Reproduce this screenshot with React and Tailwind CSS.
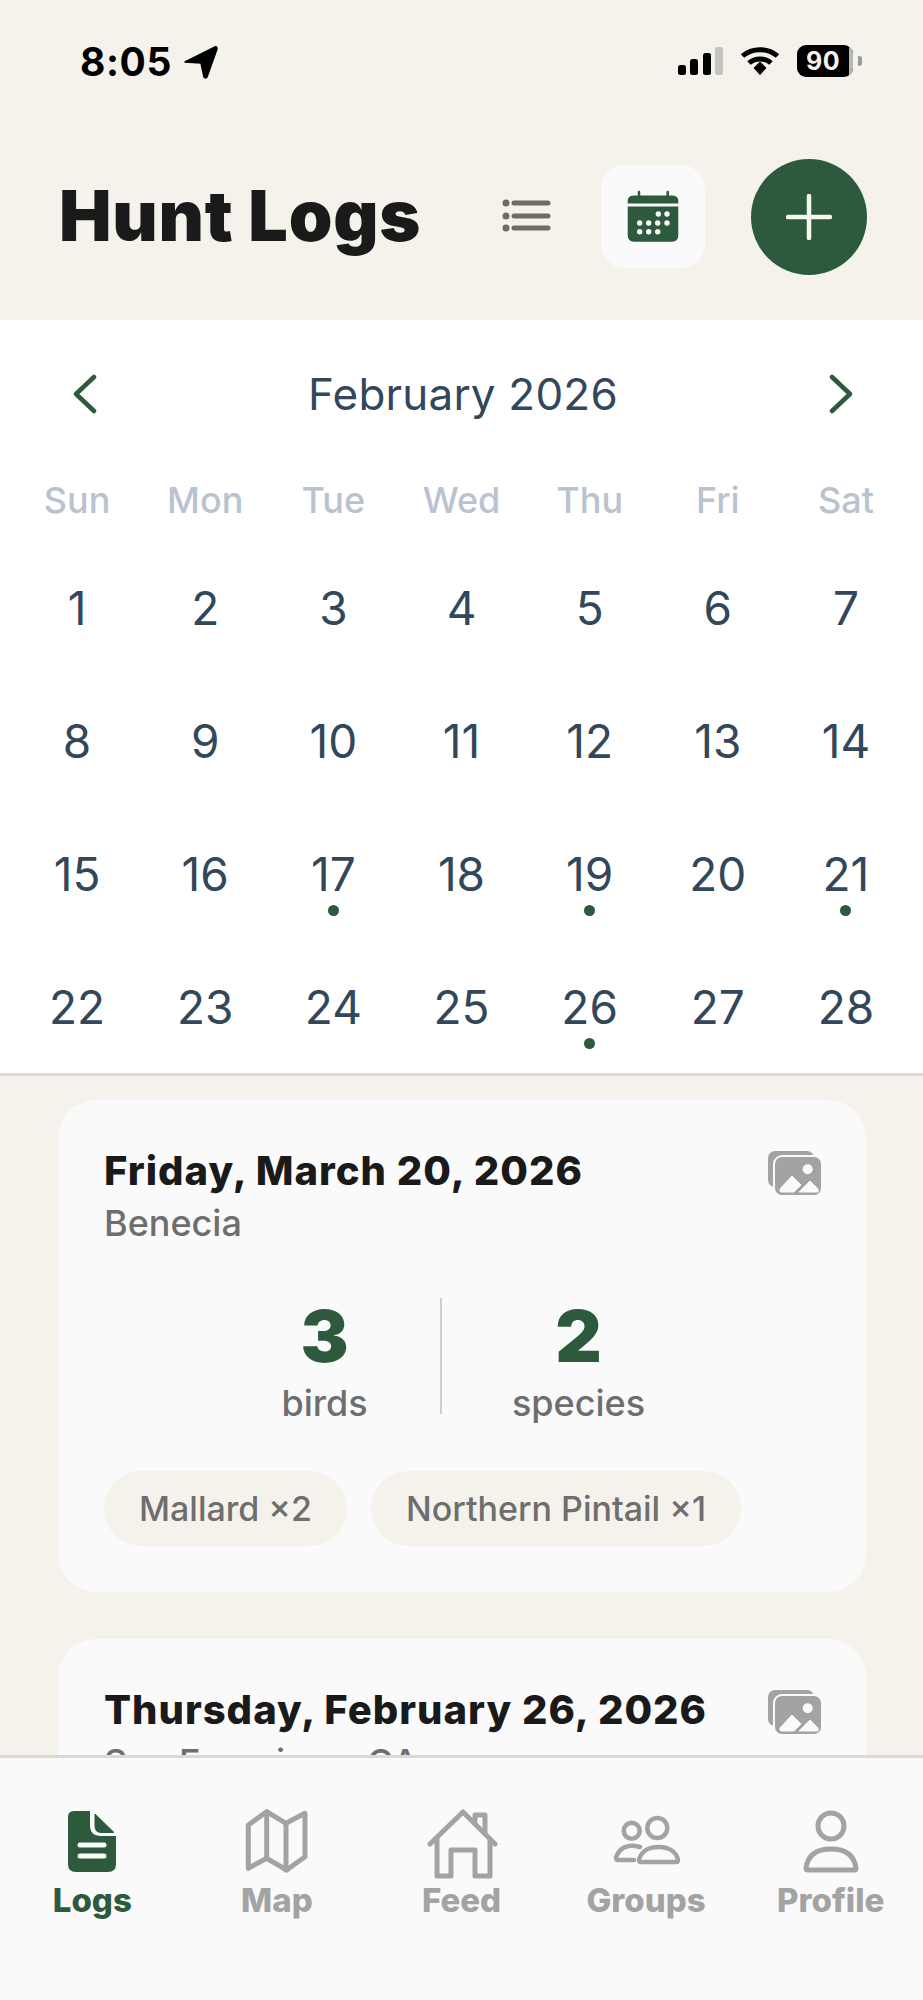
const font = { fontFamily: "Inter, sans-serif" };

const weekdays = ["Sun", "Mon", "Tue", "Wed", "Thu", "Fri", "Sat"];
const dotted = [17, 19, 21, 26];
const days = Array.from({ length: 28 }, (_, i) => i + 1);

function StatusBar() {
  return (
    <div className="h-[124px] shrink-0 flex items-start justify-between pt-[42px] pl-[80px] pr-[61px]">
      <div className="flex items-center gap-[12px] text-black">
        <span className="text-[39px] leading-[40px] font-bold tracking-[0.6px]">8:05</span>
        <svg width="34" height="34" viewBox="0 0 34 34" fill="#000">
          <path d="M1 17 L31 2 Q33 1 33 4 L23 32 Q22 34 20 32 L17 18 Z" stroke="#000" strokeWidth="1.5" strokeLinejoin="round" />
        </svg>
      </div>
      <div className="flex items-center gap-[17px] mt-[3px]">
        <svg width="46" height="30" viewBox="0 0 46 30">
          <rect x="1" y="19" width="8" height="10" rx="2.5" fill="#000" />
          <rect x="13" y="13" width="8" height="16" rx="2.5" fill="#000" />
          <rect x="26" y="7" width="8" height="22" rx="2.5" fill="#000" />
          <rect x="38" y="1" width="8" height="28" rx="2.5" fill="#c4c4be" />
        </svg>
        <svg width="40" height="30" viewBox="0 0 40 30" fill="none" stroke="#000" strokeWidth="5">
          <path d="M2.5 10 C12 1.5 28 1.5 37.5 10" />
          <path d="M9 17 C15 11.5 25 11.5 31 17" />
          <path d="M13.5 22 L20 15.5 L26.5 22 L20 29 Z" fill="#000" stroke="none" />
        </svg>
        <div className="flex items-center gap-[5px]">
          <div className="w-[56px] h-[32px] rounded-[9px] bg-black overflow-hidden flex">
            <div className="flex-1 flex items-center justify-center text-[#f5f2eb] text-[25px] font-bold leading-none tracking-[0.5px]">90</div>
            <div className="w-[4px] bg-[#b9b9b3]" />
          </div>
          <div className="w-[4px] h-[10px] rounded-r-[3px] bg-[#9a9a96]" />
        </div>
      </div>
    </div>
  );
}

function Header() {
  return (
    <div className="h-[196px] shrink-0 flex items-start pl-[59px] pr-[56px] pt-[35px]">
      <h1 className="flex-1 text-[70px] leading-[114px] font-black text-[#1a1a1a] tracking-[0.8px]">Hunt Logs</h1>
      <div className="w-[54px] h-[38px] mt-[38px] mr-[48px]">
        <svg width="54" height="38" viewBox="0 0 54 38" fill="none" stroke="#6e6b69" strokeWidth="5" strokeLinecap="round">
          <path d="M15 6 H49" />
          <path d="M15 19 H49" />
          <path d="M15 31 H49" />
          <circle cx="7" cy="6" r="3.5" fill="#6e6b69" stroke="none" />
          <circle cx="7" cy="19" r="3.5" fill="#6e6b69" stroke="none" />
          <circle cx="7" cy="31" r="3.5" fill="#6e6b69" stroke="none" />
        </svg>
      </div>
      <div className="w-[104px] h-[103px] mt-[6px] rounded-[24px] bg-[#fafafa] flex items-center justify-center">
        <svg width="54" height="54" viewBox="0 0 54 54" fill="#2d5a3d">
          <path d="M13 2 V7 M41.7 2 V7" stroke="#2d5a3d" strokeWidth="2.5" strokeLinecap="round" />
          <path d="M1.7 13.5 V11 Q1.7 5.5 8 5.5 H46 Q52.3 5.5 52.3 11 V13.5 Z" />
          <path d="M1.7 16.5 H52.3 V45 Q52.3 51.7 46 51.7 H8 Q1.7 51.7 1.7 45 Z" />
          <g fill="#fafafa">
            <circle cx="32.3" cy="24" r="2.7" />
            <circle cx="41" cy="24" r="2.7" />
            <circle cx="13.7" cy="33" r="2.7" />
            <circle cx="22.7" cy="33" r="2.7" />
            <circle cx="31.7" cy="33" r="2.7" />
            <circle cx="41" cy="33" r="2.7" />
            <circle cx="13.7" cy="41.7" r="2.7" />
            <circle cx="22.7" cy="41.7" r="2.7" />
            <circle cx="31.7" cy="41.7" r="2.7" />
          </g>
        </svg>
      </div>
      <div className="w-[116px] h-[116px] ml-[46px] rounded-full bg-[#2d5a3d] flex items-center justify-center">
        <svg width="46" height="46" viewBox="0 0 46 46" fill="none" stroke="#f5f5f2" strokeWidth="4.5" strokeLinecap="round">
          <path d="M23 2 V44" />
          <path d="M2 23 H44" />
        </svg>
      </div>
    </div>
  );
}

function Calendar() {
  return (
    <div className="h-[756px] shrink-0 bg-white border-b-[3px] border-[#d9d9d5] px-[13px]">
      <div className="h-[148px] flex items-center justify-between pl-[59px] pr-[56px]">
        <svg width="26" height="40" viewBox="0 0 26 40" fill="none" stroke="#2d5a3d" strokeWidth="4.5" strokeLinecap="round" strokeLinejoin="round">
          <path d="M22 3 L4 20 L22 37" />
        </svg>
        <span className="text-[44px] leading-none text-[#33475a] tracking-[0.2px]">February 2026</span>
        <svg width="26" height="40" viewBox="0 0 26 40" fill="none" stroke="#2d5a3d" strokeWidth="4.5" strokeLinecap="round" strokeLinejoin="round">
          <path d="M4 3 L22 20 L4 37" />
        </svg>
      </div>
      <div className="grid grid-cols-7 h-[64px] items-center">
        {weekdays.map((d) => (
          <div key={d} className="text-center text-[36px] leading-none font-[550] text-[#b9c3d0]">{d}</div>
        ))}
      </div>
      <div className="grid grid-cols-7 auto-rows-[133px] pt-[23px]">
        {days.map((d) => (
          <div key={d} className="flex flex-col items-center pt-[28px]">
            <span className="text-[46px] leading-[50px] text-[#33475a]">{d}</span>
            {dotted.includes(d) && <span className="w-[11px] h-[11px] mt-[6px] rounded-full bg-[#2d5a3d]" />}
          </div>
        ))}
      </div>
    </div>
  );
}

function Gallery() {
  return (
    <svg width="56" height="48" viewBox="0 0 56 48" className="shrink-0">
      <rect x="1" y="2" width="46" height="36" rx="7" fill="#a3a3a3" />
      <rect x="6" y="6" width="50" height="42" rx="9" fill="#fafafa" />
      <rect x="8" y="8" width="46" height="38" rx="7" fill="#a3a3a3" />
      <circle cx="40.7" cy="20.3" r="5" fill="#fafafa" />
      <path d="M13 42 V40 L25 27 L34 36 L27 43 H14 Z" fill="#fafafa" stroke="#fafafa" strokeWidth="1" strokeLinejoin="round" />
      <path d="M32 43 L43 32 L51 40 V43 Z" fill="#fafafa" stroke="#fafafa" strokeWidth="1" strokeLinejoin="round" />
    </svg>
  );
}

function Stat({ value, label, width }) {
  return (
    <div className={width + " flex flex-col items-center"}>
      <span className="text-[72px] leading-[76px] font-black text-[#2d5a3d]">{value}</span>
      <span className="text-[36px] leading-[42px] font-[550] text-[#6e6e6e] mt-[8px]">{label}</span>
    </div>
  );
}

function Card({ date, place, stats, chips }) {
  return (
    <div className="rounded-[38px] bg-[#fafafa] px-[46px] pt-[46px] pb-[46px] mb-[47px]">
      <div className="flex items-start justify-between h-[50px]">
        <span className="text-[40px] leading-[50px] font-extrabold text-[#1a1a1a] tracking-[1px]">{date}</span>
        <div className="mr-[-3px] mt-[3px]"><Gallery /></div>
      </div>
      <div className="text-[36px] leading-[52px] font-[550] text-[#6e6e6e] mt-[1px]">{place}</div>
      {stats && (
        <div className="flex justify-center items-stretch mt-[49px] pr-[5px]">
          <Stat value={stats[0]} label="birds" width="w-[174px]" />
          <div className="w-[2px] h-[116px] bg-[#cfcfcf] ml-[28px] mr-[34px]" />
          <Stat value={stats[1]} label="species" width="w-[206px]" />
        </div>
      )}
      {chips && (
        <div className="flex gap-[24px] mt-[47px]">
          {chips.map((c) => (
            <span key={c} className="h-[75px] px-[35px] rounded-full bg-[#f5f2eb] flex items-center text-[34px] font-[550] text-[#6e6e6e]">{c}</span>
          ))}
        </div>
      )}
    </div>
  );
}

const navItem = "flex flex-col items-center";
const navLabel = "text-[33px] leading-[40px] font-extrabold text-[#a3a3a3]";

function Nav() {
  return (
    <div className="h-[245px] shrink-0 bg-[#fafafa] border-t-[3px] border-[#d9d9d5] grid grid-cols-5 pt-[50px]">
      <div className={navItem}>
        <div className="h-[72px] flex items-start">
          <svg width="48" height="62" viewBox="0 0 48 62" className="mt-[3px]" fill="#2d5a3d">
            <path d="M6 0 H22 V14 Q22 25 33 25 H48 V53 Q48 61 40 61 H8 Q0 61 0 53 V6 Q0 0 6 0 Z" />
            <path d="M27 3 L46 21.5 H33 Q27 21.5 27 15 Z" stroke="#2d5a3d" strokeLinejoin="round" />
            <path d="M12 34 H36 M12 45 H36" stroke="#fafafa" strokeWidth="5" strokeLinecap="round" />
          </svg>
        </div>
        <span className="text-[33px] leading-[40px] font-extrabold text-[#2d5a3d]">Logs</span>
      </div>
      <div className={navItem}>
        <div className="h-[72px] flex items-start">
          <svg width="64" height="64" viewBox="0 0 64 64" className="mt-[1px]" fill="none" stroke="#a3a3a3" strokeWidth="5" strokeLinejoin="round" strokeLinecap="round">
            <path d="M3.3 16 L21.7 2.7 L41 14.3 L60 4.3 V47.7 L41.7 61 L21.7 49.3 L3.3 59.3 Z" />
            <path d="M21.7 2.7 V49.3" />
            <path d="M41 14.3 V61" />
          </svg>
        </div>
        <span className={navLabel}>Map</span>
      </div>
      <div className={navItem}>
        <div className="h-[72px] flex items-start">
          <svg width="72" height="72" viewBox="0 0 72 72" className="ml-[2px]" fill="none" stroke="#a3a3a3" strokeWidth="5" strokeLinejoin="round" strokeLinecap="round">
            <path d="M4 36 L37 4 L69 36" />
            <path d="M11 31 V68 H25 V42 H49 V68 H64 V31" />
            <path d="M49 14 V7 H59 V25" />
          </svg>
        </div>
        <span className={navLabel}>Feed</span>
      </div>
      <div className={navItem}>
        <div className="h-[72px] flex items-start">
          <svg width="72" height="54" viewBox="0 0 72 54" className="mt-[6px]" fill="none" stroke="#a3a3a3" strokeWidth="4.5" strokeLinejoin="round" strokeLinecap="round">
            <circle cx="47.3" cy="14" r="10" />
            <circle cx="21.7" cy="16.7" r="8" />
            <path d="M29 46 C31 37 39 33 48.5 33 C58 33 66 37 68 46 Q68 48 66 48 H31 Q29 48 29 46 Z" />
            <path d="M30 33 C26 32 22 31 19 32 C12 33 8 38 6 43 Q6 46 8 46 H24" />
          </svg>
        </div>
        <span className={navLabel}>Groups</span>
      </div>
      <div className={navItem}>
        <div className="h-[72px] flex items-start">
          <svg width="62" height="66" viewBox="0 0 62 66" fill="none" stroke="#a3a3a3" strokeWidth="5" strokeLinejoin="round" strokeLinecap="round">
            <circle cx="31" cy="18" r="13" />
            <path d="M6 60 C8 46 18 41 31 41 C44 41 54 46 56 60 Q56 62 54 62 H8 Q6 62 6 60 Z" />
          </svg>
        </div>
        <span className={navLabel}>Profile</span>
      </div>
    </div>
  );
}

export default function App() {
  return (
    <div style={font} className="w-[923px] h-[2000px] flex flex-col overflow-hidden bg-[#f5f2eb] [font-optical-sizing:none]">
      <StatusBar />
      <Header />
      <Calendar />
      <div className="flex-1 min-h-0 overflow-hidden pl-[58px] pr-[57px] pt-[24px]">
        <Card date="Friday, March 20, 2026" place="Benecia" stats={["3", "2"]} chips={["Mallard ×2", "Northern Pintail ×1"]} />
        <Card date="Thursday, February 26, 2026" place="San Francisco, CA" />
      </div>
      <Nav />
    </div>
  );
}
